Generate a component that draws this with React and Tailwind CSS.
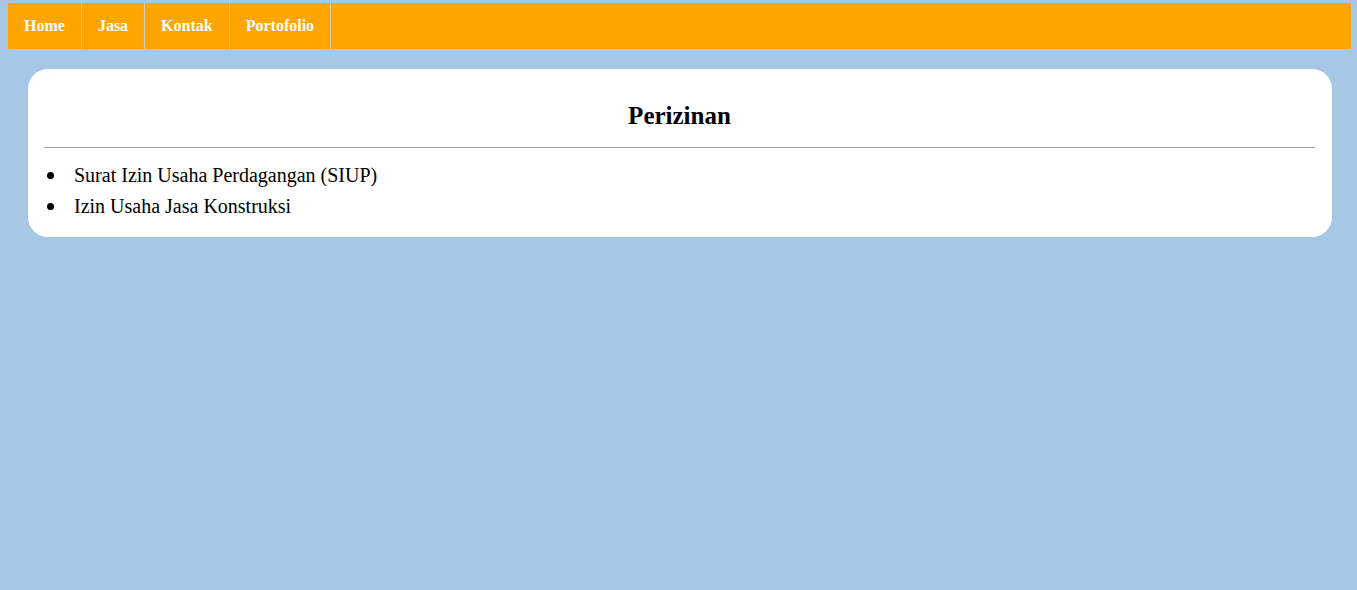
import React from "react";

const menu = ["Home", "Jasa", "Kontak", "Portofolio"];

const items = ["Surat Izin Usaha Perdagangan (SIUP)", "Izin Usaha Jasa Konstruksi"];

export default function App() {
    return (
        <div className="min-h-screen bg-[#a6c7e5] pl-2 pr-[6px] pt-[3px] font-['Liberation_Serif',serif]">
            <nav className="flex h-[46px] bg-[#ffa500]">
                {menu.map((m) => (
                    <a
                        key={m}
                        href="#"
                        className="flex items-center border-r border-[#d9c9b0] px-4 text-[16px] font-bold text-white"
                    >
                        {m}
                    </a>
                ))}
            </nav>

            <div className="ml-5 mr-[19px] mt-5 rounded-[20px] bg-white pl-4 pr-[17px] pt-[33px] pb-[15px]">
                <h2 className="text-center text-[25px] leading-7 font-bold text-black">Perizinan</h2>
                <hr className="mt-[17px] border-t border-[#a0a0a0]" />
                <ul className="mt-3 text-[20px] leading-[31px] text-black">
                    {items.map((it) => (
                        <li key={it} className="flex items-center">
                            <span className="flex w-[30px] pl-[3px]">
                                <span className="h-[7px] w-[7px] rounded-full bg-black"></span>
                            </span>
                            <span>{it}</span>
                        </li>
                    ))}
                </ul>
            </div>
        </div>
    );
}
